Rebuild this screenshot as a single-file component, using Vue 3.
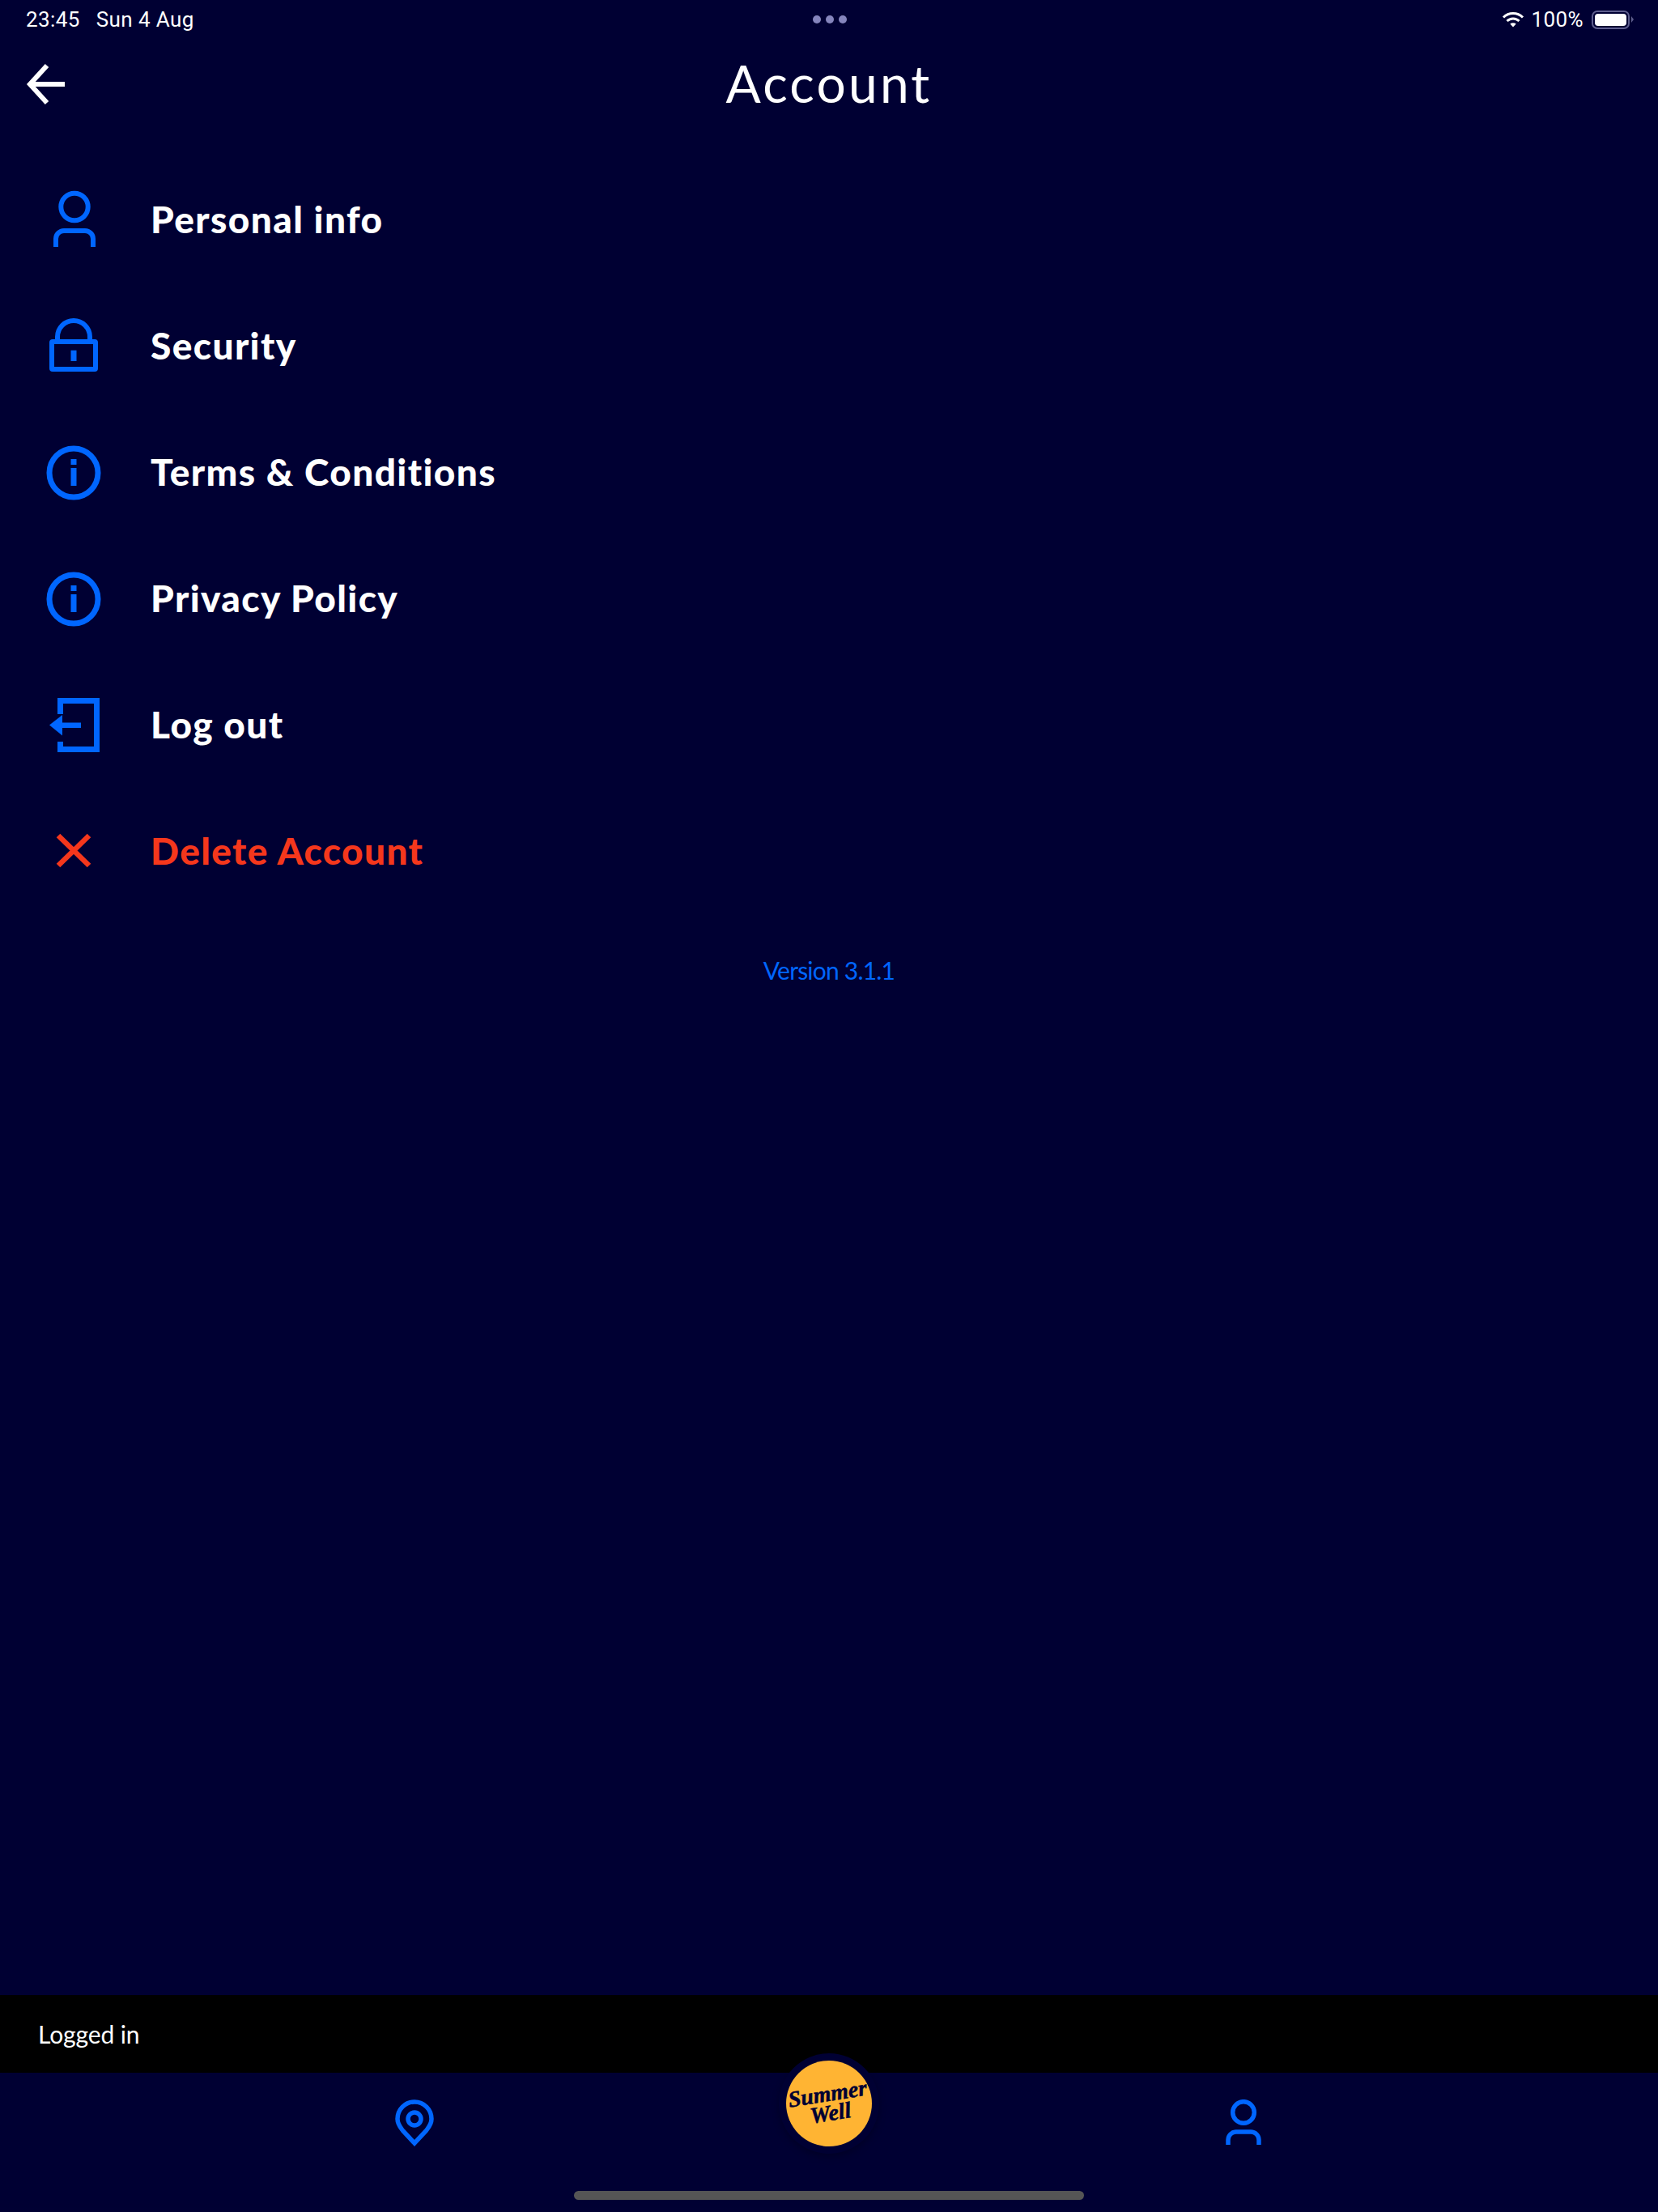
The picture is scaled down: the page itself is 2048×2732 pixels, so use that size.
<template>
  <div class="account-page">
    <div class="status-bar">
      <div class="status-left">
        <span>23:45</span>
        <span>Sun 4 Aug</span>
      </div>
      <div class="status-dots"><i></i><i></i><i></i></div>
      <div class="status-right">
        <svg class="wifi" width="28" height="20" viewBox="0 0 28 20">
          <path d="M2 7.5A17 17 0 0 1 26 7.5" fill="none" stroke="#fff" stroke-width="3" />
          <path d="M6.5 12A10.6 10.6 0 0 1 21.5 12" fill="none" stroke="#fff" stroke-width="3" />
          <path d="M10.3 15.6A5.4 5.4 0 0 1 17.7 15.6L14 19.6Z" fill="#fff" />
        </svg>
        <span class="battery-text">100%</span>
        <div class="battery"><div class="battery-fill"></div></div>
        <div class="battery-nub"></div>
      </div>
    </div>

    <header class="page-header">
      <svg class="back" width="56" height="56" viewBox="0 0 56 56">
        <path d="M28 5L7 28L28 51M7 28H50" fill="none" stroke="#fff" stroke-width="6" />
      </svg>
      <h1>Account</h1>
      <div></div>
    </header>

    <main class="main">
      <ul class="menu">
        <li v-for="item in items" :key="item.label" class="menu-row" :class="{ danger: item.icon === 'close' }">
          <div class="menu-icon">
            <svg width="80" height="80" viewBox="0 0 80 80">
              <g v-if="item.icon === 'person'" fill="none" stroke="#0066ff" stroke-width="6">
                <circle cx="41" cy="23.5" r="16.7" />
                <path d="M18 73V63a10 10 0 0 1 10-10h26a10 10 0 0 1 10 10V73" />
              </g>
              <g v-else-if="item.icon === 'lock'">
                <rect x="13" y="34" width="54" height="34" rx="1" fill="none" stroke="#0066ff" stroke-width="6" />
                <path d="M20 32V28a20 20 0 0 1 40 0V32" fill="none" stroke="#0066ff" stroke-width="6" />
                <rect x="36.5" y="44.7" width="7" height="13.3" fill="#0066ff" />
              </g>
              <g v-else-if="item.icon === 'info'">
                <circle cx="40" cy="40" r="30" fill="none" stroke="#0066ff" stroke-width="7" />
                <rect x="36.5" y="23" width="7" height="7" fill="#0066ff" />
                <rect x="36.5" y="34" width="7" height="22" fill="#0066ff" />
              </g>
              <g v-else-if="item.icon === 'logout'">
                <path d="M23.5 26V9.500H68.500V69.500H23.500V60" fill="none" stroke="#0066ff" stroke-width="7" />
                <path d="M10 39.600L26 27V52.600Z" fill="#0066ff" />
                <rect x="26" y="36.500" width="23" height="6.500" fill="#0066ff" />
              </g>
              <g v-else fill="none" stroke="#f5371c" stroke-width="6.500">
                <path d="M21 20L59 57M59 20L21 57" />
              </g>
            </svg>
          </div>
          <span class="menu-label">{{ item.label }}</span>
        </li>
      </ul>
      <p class="version">Version 3.1.1</p>
    </main>

    <div class="login-bar">Logged in</div>

    <nav class="tab-bar">
      <div class="tabs">
        <div class="tab">
          <svg width="48" height="58" viewBox="0 0 48 58">
            <path d="M24 3a21 21 0 0 1 21 21c0 7-4 11-7 15L24 54L10 39c-3-4-7-8-7-15A21 21 0 0 1 24 3Z" fill="none" stroke="#0066ff" stroke-width="5.500" />
            <circle cx="24" cy="24" r="8" fill="none" stroke="#0066ff" stroke-width="5.500" />
          </svg>
        </div>
        <div class="tab">
          <div class="logo-ring">
            <div class="logo"><span>Summer<br />Well</span></div>
          </div>
        </div>
        <div class="tab">
          <svg width="44" height="56" viewBox="0 0 44 56">
            <circle cx="22" cy="16" r="13.300" fill="none" stroke="#0066ff" stroke-width="5.500" />
            <path d="M3 56V50a10 10 0 0 1 10-10h18a10 10 0 0 1 10 10V56" fill="none" stroke="#0066ff" stroke-width="5.500" />
          </svg>
        </div>
      </div>
      <div class="home-bar"></div>
    </nav>
  </div>
</template>

<script setup>
const items = [
  { label: 'Personal info', icon: 'person' },
  { label: 'Security', icon: 'lock' },
  { label: 'Terms & Conditions', icon: 'info' },
  { label: 'Privacy Policy', icon: 'info' },
  { label: 'Log out', icon: 'logout' },
  { label: 'Delete Account', icon: 'close' }
]
</script>

<style>
body { background: #000033; }
</style>

<style scoped>
.account-page {
  width: 2048px;
  height: 2732px;
  display: flex;
  flex-direction: column;
  background: #000033;
  color: #fff;
  font-family: Lato, "Noto Sans", sans-serif;
  overflow: hidden;
}
.status-bar {
  height: 48px;
  display: grid;
  grid-template-columns: 1fr auto 1fr;
  align-items: center;
  padding: 0 30px 0 32px;
  font-family: Roboto, sans-serif;
  font-size: 26px;
  letter-spacing: 0.4px;
}
.status-left { display: flex; gap: 20px; }
.status-dots { display: flex; gap: 6px; }
.status-dots i { width: 10px; height: 10px; border-radius: 50%; background: #8585bd; }
.status-right { display: flex; align-items: center; justify-content: flex-end; }
.wifi { margin-right: 9px; }
.battery-text { margin-right: 10px; }
.battery {
  width: 47px;
  height: 23px;
  box-sizing: border-box;
  border: 2px solid #5f5f8e;
  border-radius: 7px;
  padding: 2px;
}
.battery-fill { width: 100%; height: 100%; background: #fff; border-radius: 4px; }
.battery-nub {
  width: 0;
  height: 0;
  margin-left: 2px;
  border-left: 3px solid #5f5f8e;
  border-top: 4px solid transparent;
  border-bottom: 4px solid transparent;
}
.page-header {
  height: 112px;
  display: grid;
  grid-template-columns: 1fr auto 1fr;
  align-items: center;
  padding: 0 30px;
}
.page-header h1 {
  margin: 0 0 3px;
  font-size: 64px;
  font-weight: 400;
  letter-spacing: 3.2px;
}
.main { flex: 1; padding-top: 34px; }
.menu { list-style: none; margin: 0; padding: 0; }
.menu-row { height: 156px; display: flex; align-items: center; }
.menu-icon { width: 182px; display: flex; justify-content: center; }
.menu-icon svg { display: block; }
.menu-label {
  margin-left: 4px;
  padding-bottom: 3px;
  font-size: 46px;
  font-weight: 900;
  letter-spacing: 1.4px;
}
.danger .menu-label { color: #f5371c; }
.version {
  margin: 42px 0 0;
  text-align: center;
  color: #0066ff;
  font-size: 30px;
  letter-spacing: -0.8px;
  line-height: 52px;
}
.login-bar {
  height: 96px;
  display: flex;
  align-items: center;
  padding-left: 47px;
  background: #000;
  font-size: 30px;
  letter-spacing: -0.1px;
}
.tab-bar { height: 172px; }
.tabs {
  height: 146px;
  box-sizing: border-box;
  padding: 33px 256px 0;
  display: grid;
  grid-template-columns: repeat(3, 512px);
}
.tab { display: flex; justify-content: center; align-items: flex-start; }
.tab svg { display: block; }
.logo-ring {
  width: 124px;
  height: 124px;
  margin-top: -57px;
  border-radius: 50%;
  background: #000033;
  box-shadow: 0 4px 10px rgba(0, 0, 0, 0.25);
  display: flex;
  align-items: center;
  justify-content: center;
}
.logo {
  width: 106px;
  height: 106px;
  border-radius: 50%;
  background: #ffb433;
  display: flex;
  align-items: center;
  justify-content: center;
}
.logo span {
  transform: rotate(-9deg);
  color: #000033;
  font-family: "Liberation Serif", serif;
  font-size: 28px;
  font-weight: 700;
  font-style: italic;
  line-height: 24px;
  text-align: center;
  -webkit-text-stroke: 0.5px #000033;
}
.home-bar {
  width: 630px;
  height: 11px;
  margin: 0 auto;
  border-radius: 6px;
  background: #555;
}
</style>
